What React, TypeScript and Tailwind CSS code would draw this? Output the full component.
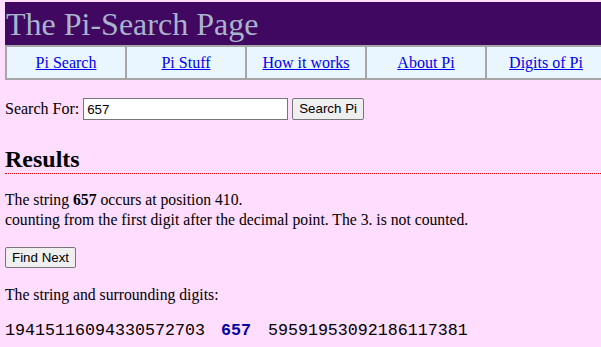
const tabs = ["Pi Search", "Pi Stuff", "How it works", "About Pi", "Digits of Pi"];

export default function App() {
  return (
    <div className="min-h-[347px] w-[601px] overflow-hidden bg-[#ffddff] pl-[5px] pt-[2px] font-['Liberation_Serif',serif] text-[16px] text-black">
      <div className="w-[620px]">
        <div className="flex h-[43px] items-center bg-[#400860] pl-[1px] text-[32px] leading-none text-[#a8b4cc]">
          The Pi-Search Page
        </div>
        <div className="flex">
          {tabs.map((t) => (
            <div
              key={t}
              className="flex h-[35px] w-[120px] shrink-0 items-center justify-center border-2 border-r-0 border-[#a6a6a6] bg-[#eaf6ff]"
            >
              <a href="#" className="text-[#0000ee] underline">
                {t}
              </a>
            </div>
          ))}
        </div>
      </div>

      <div className="mt-[17px] flex items-center gap-[4px]">
        <span>Search For:</span>
        <input
          defaultValue="657"
          className="h-[22px] w-[205px] border border-[#767676] bg-white px-[3px] font-['Liberation_Sans',sans-serif] text-[13.33px] outline-none"
        />
        <button className="h-[22px] rounded-[2px] border border-[#767676] bg-[#efefef] px-[6px] font-['Liberation_Sans',sans-serif] text-[13.33px]">
          Search Pi
        </button>
      </div>

      <h2 className="mt-[24px] border-b border-dotted border-red-600 text-[24px] font-bold leading-[28px]">
        Results
      </h2>

      <p className="mt-[16px] text-[15.7px] leading-[20px]">
        The string <b>657</b> occurs at position 410.
        <br />
        counting from the first digit after the decimal point. The 3. is not counted.
      </p>

      <button className="mt-[17px] h-[21px] rounded-[2px] border border-[#767676] bg-[#efefef] px-[6px] font-['Liberation_Sans',sans-serif] text-[13.33px]">
        Find Next
      </button>

      <p className="mt-[16px] text-[15.7px] leading-[20px]">The string and surrounding digits:</p>

      <p className="mt-[16px] whitespace-pre font-['Liberation_Mono',monospace] text-[16.67px] leading-[20px]">
        19415116094330572703 <b className="ml-[6px] mr-[7px] text-[#0000a0]">657</b> 59591953092186117381
      </p>
    </div>
  );
}
